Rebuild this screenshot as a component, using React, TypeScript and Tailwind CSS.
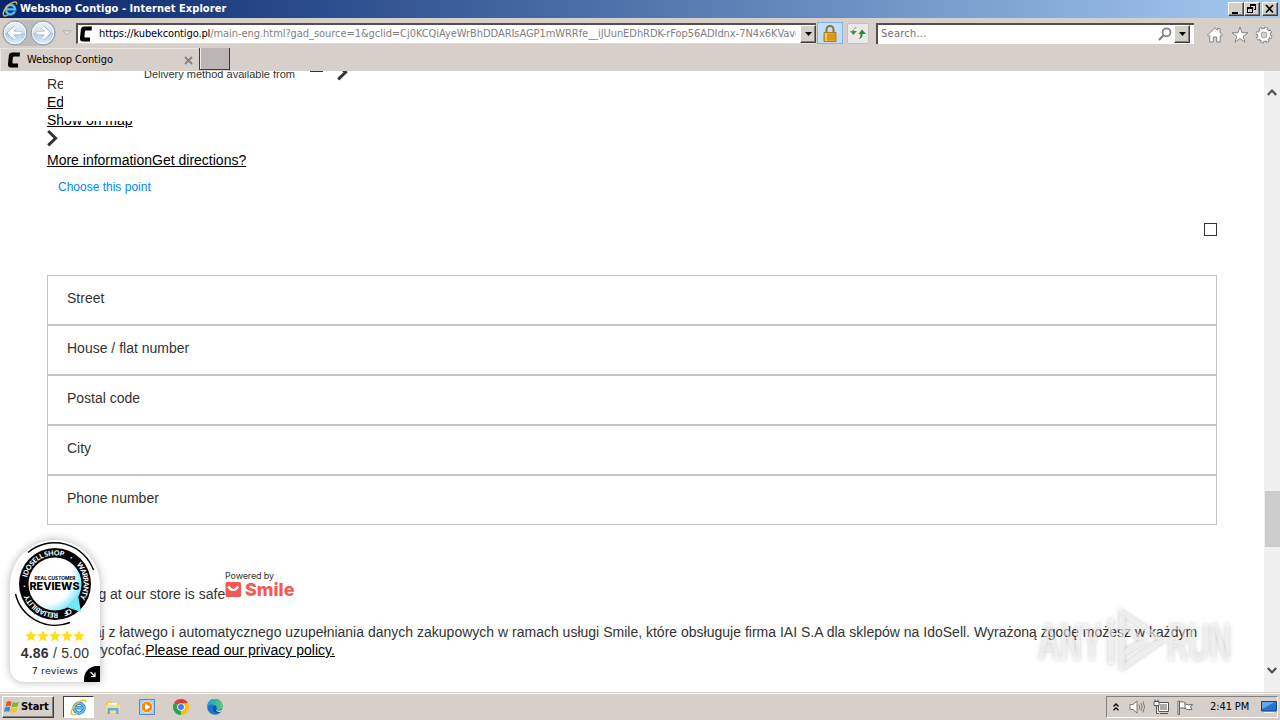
import type { ReactNode } from "react";

const fields = ["Street", "House / flat number", "Postal code", "City", "Phone number"];

const tahoma = "font-['DejaVu_Sans_Condensed','DejaVu_Sans',sans-serif]";
const arial = "font-['Liberation_Sans',Arial,sans-serif]";

const ContigoIcon = () => (
  <svg width="14" height="16" viewBox="0 0 14 16" className="shrink-0">
    <path d="M13 .5H5Q2.3.5 1.9 3L1 12Q.8 15.5 3.8 15.5H11V11.5H6.4Q5.3 11.5 5.4 10.3L5.9 5.6Q6 4.5 7.1 4.5H12.6Z" fill="#000" />
  </svg>
);

const IeIcon = ({ size }: { size: number }) => (
  <svg width={size} height={size} viewBox="0 0 16 16" className="shrink-0">
    <path d="M12.9 10.3A4.7 4.7 0 1 1 13.2 8.3H4.4" fill="none" stroke="#1b76c4" strokeWidth="3.1" />
    <path d="M12.9 10.3A4.7 4.7 0 1 1 13.2 8.3H4.4" fill="none" stroke="#63c2f2" strokeWidth="1.7" />
    <path d="M2.3 14.8C-.8 13.4 3.2 5.7 8.5 2.6C12.5.2 15.3.4 14.6 3.3M2.3 14.8C3.4 15.3 5 14.6 6.3 13.7" fill="none" stroke="#e9bd2c" strokeWidth="1.3" />
  </svg>
);

const Arrow = ({ flip }: { flip?: boolean }) => (
  <svg width="26" height="26" viewBox="0 0 26 26" className={flip ? "-scale-x-100" : ""}>
    <defs>
      <linearGradient id="nav" x1="0" y1="0" x2="0" y2="1">
        <stop offset="0" stopColor="#eef2f5" />
        <stop offset=".48" stopColor="#d5e0ea" />
        <stop offset=".52" stopColor="#b4cadf" />
        <stop offset="1" stopColor="#e2f3fb" />
      </linearGradient>
    </defs>
    <circle cx="13" cy="13" r="11.8" fill="url(#nav)" stroke="#8b9aa8" />
    <circle cx="13" cy="13" r="10.7" fill="none" stroke="#fff" strokeOpacity=".8" />
    <path d="M19.5 13H8M13 7.5L7.5 13L13 18.5" fill="none" stroke="#8fa9c1" strokeWidth="4.2" />
    <path d="M19.5 13H8M13 7.5L7.5 13L13 18.5" fill="none" stroke="#fff" strokeWidth="3" />
  </svg>
);

const DropButton = ({ className }: { className: string }) => (
  <span className={`flex items-center justify-center bg-[#d4d0c8] border border-t-white border-l-white border-r-[#404040] border-b-[#404040] shadow-[inset_-1px_-1px_#808080] ${className}`}>
    <svg width="7" height="4" viewBox="0 0 7 4"><path d="M0 0H7L3.5 4Z" /></svg>
  </span>
);

const WindowButton = ({ children }: { children: ReactNode }) => (
  <span className="w-4 h-3.5 bg-[#d4d0c8] border border-t-white border-l-white border-r-[#404040] border-b-[#404040] shadow-[inset_-1px_-1px_#808080]">
    <svg width="14" height="12" viewBox="0 0 14 12">{children}</svg>
  </span>
);

const TitleBar = () => (
  <header className="h-[18px] flex items-center pl-0.5 pr-0.5 bg-linear-to-r from-[#0a246a] to-[#a6caf0]">
    <IeIcon size={16} />
    <span className="ml-0.5 pt-px text-[11px] font-bold text-white whitespace-nowrap tracking-[0.05px]">
      Webshop Contigo - Internet Explorer
    </span>
    <div className="ml-auto flex">
      <WindowButton><path d="M3 9h6v2H3z" /></WindowButton>
      <WindowButton>
        <path d="M5 1h6v6H9V6h1V3H6v1H5zM2 4h6v6H2zM3 6v3h4V6z" fillRule="evenodd" />
      </WindowButton>
      <span className="w-0.5" />
      <WindowButton><path d="M3 2L10 9.5M10 2L3 9.5" stroke="#000" strokeWidth="1.7" /></WindowButton>
    </div>
  </header>
);

const AddressBar = () => (
  <div className="h-[30px] flex items-center">
    <div className="w-[76px] flex items-center pl-0.5">
      <div className="flex gap-0.5 rounded-full bg-[#bcbcbc]"><Arrow /><Arrow flip /></div>
      <svg width="10" height="6" viewBox="0 0 10 6" className="ml-1.5"><path d="M1 .8H9L5 5Z" fill="#e6e3df" stroke="#b3afab" /></svg>
    </div>
    <div className="w-[740px] h-[21px] flex items-center bg-white border-t-2 border-l-2 border-t-[#55504d] border-l-[#55504d] border-b border-b-[#e2deda] pl-[1px]">
      <ContigoIcon />
      <div className="ml-[6px] pt-0.5 w-[697px] overflow-hidden whitespace-nowrap text-[11px] tracking-[-0.055px] text-[#808080]">
        <span className="text-black tracking-[-0.12px]">https://kubekcontigo.pl</span>
        /main-eng.html?gad_source=1&amp;gclid=Cj0KCQiAyeWrBhDDARIsAGP1mWRRfe__iJUunEDhRDK-rFop56ADIdnx-7N4x6KVavcQ
      </div>
      <DropButton className="ml-auto w-4 h-[18px]" />
    </div>
    <div className="ml-[1px] w-[26px] h-[22px] flex items-center justify-center bg-[#c4ddf8] border border-[#7eb4ea]">
      <svg width="14" height="17" viewBox="0 0 14 17">
        <path d="M3.5 8V4.5a3.5 3.5 0 0 1 7 0V8" fill="none" stroke="#8d7433" strokeWidth="2" />
        <path d="M1 7.5h12v9H1z" fill="#e9a820" stroke="#ad7a16" />
        <path d="M1.5 10h11M1.5 12h11M1.5 14h11" stroke="#c68716" />
        <path d="M3 8v8" stroke="#f8d474" strokeWidth="1.5" />
      </svg>
    </div>
    <div className="ml-1 w-[22px] h-[21px] flex items-center justify-center bg-[#ebe9e7] border border-[#c3bfbb] rounded-xs">
      <svg width="16" height="14" viewBox="0 0 16 14">
        <path d="M7 1Q4 1 4 4V5H7L3.2 9L0 5H2" fill="#3e9b43" />
        <path d="M9 13Q12.5 12 12.5 9V8H16L12 3.5L8.5 8H10.5V9Q10.5 11 9 13Z" fill="#2b8a35" />
      </svg>
    </div>
    <div className="ml-[7px] w-[318px] h-[21px] flex items-center bg-white border-t-2 border-l-2 border-t-[#55504d] border-l-[#55504d] pr-1">
      <span className="ml-[3px] pt-px text-[11px] text-[#707070] tracking-[0.25px]">Search...</span>
      <svg width="14" height="14" viewBox="0 0 14 14" className="ml-auto mr-0.5">
        <circle cx="8.5" cy="5.3" r="4" fill="none" stroke="#808080" strokeWidth="1.7" />
        <path d="M5.5 8.3L1 13" stroke="#808080" strokeWidth="2.2" />
      </svg>
      <DropButton className="w-4 h-[18px]" />
    </div>
    <div className="ml-3 flex items-center gap-[7px] mt-[3px]">
      <svg width="18" height="18" viewBox="0 0 18 18" fill="#fff" stroke="#858585">
        <path d="M1.5 9L9 1.8L11.6 4.3V2.5H14V6.6L16.5 9L15 10.3L14.2 9.7V16H10.7V11H7.3V16H3.8V9.7L3 10.3Z" />
      </svg>
      <svg width="18" height="18" viewBox="0 0 18 18" fill="#fff" stroke="#858585">
        <path d="M9 1L11 6.7H17L12.2 10.3L14 16.2L9 12.6L4 16.2L5.8 10.3L1 6.7H7Z" />
      </svg>
      <svg width="18" height="18" viewBox="0 0 18 18" className="-ml-px">
        <circle cx="9" cy="9" r="6.6" fill="none" stroke="#808080" strokeWidth="3.4" strokeDasharray="3.2 1.98" />
        <circle cx="9" cy="9" r="4.8" fill="none" stroke="#808080" strokeWidth="4.2" />
        <circle cx="9" cy="9" r="6.6" fill="none" stroke="#fff" strokeWidth="2" strokeDasharray="1.8 3.38" strokeDashoffset="-.7" />
        <circle cx="9" cy="9" r="4.6" fill="none" stroke="#fff" strokeWidth="2.8" />
        <circle cx="9" cy="9" r="2.2" fill="#d6cfca" />
      </svg>
    </div>
  </div>
);

const TabBar = () => (
  <div className="h-[23px] flex items-start">
    <div className="w-[199px] h-[23px] flex items-center pl-[6px] pr-1.5 border-t border-l border-[#e9e5e1]">
      <ContigoIcon />
      <span className="ml-1.5 pt-px text-[11px] text-black tracking-[-0.05px]">Webshop Contigo</span>
      <svg width="9" height="9" viewBox="0 0 9 9" className="ml-auto"><path d="M1 1L8 8M8 1L1 8" stroke="#8a8582" strokeWidth="1.8" /></svg>
    </div>
    <div className="w-[31px] h-[22px] bg-[#bbb6b3] border-l border-r border-b border-[#3c3938] shadow-[inset_1px_0_#eee]" />
  </div>
);

const Chevron = () => (
  <svg width="11" height="18" viewBox="0 0 11 18"><path d="M1.2 2L8.6 9.3L1.2 16.4" fill="none" stroke="#333" strokeWidth="3" /></svg>
);

// start angle (clockwise from the top) and arc length of each word on the ring
const ringWords = [
  { text: "IDOSELL SHOP", angle: 283, length: 47 },
  { text: "·", angle: 30, length: 2 },
  { text: "WARRANTY", angle: 48, length: 36 },
  { text: "OF", angle: 148, length: 8 },
  { text: "RELIABILITY", angle: 174, length: 37 },
  { text: "·", angle: 264, length: 2 },
];

const ReviewsBadge = () => (
  <div className="absolute left-[10px] top-[469px] w-[90px] h-[142px] flex flex-col items-center bg-white rounded-t-[45px] rounded-bl-[14px] shadow-[0_0_8px_rgba(0,0,0,0.3)]">
    <svg width="86" height="86" viewBox="0 0 86 86" className="mt-px shrink-0">
      <defs>
        <path id="ring" d="M43 14.3A28.7 28.7 0 1 1 42.9 14.3" />
        <radialGradient id="glow" cx=".3" cy=".36" r=".75">
          <stop offset=".7" stopColor="#fff" />
          <stop offset="1" stopColor="#6fe6f5" />
        </radialGradient>
      </defs>
      <circle cx="43" cy="43" r="36" fill="#050505" />
      <circle cx="43" cy="43" r="26.5" fill="url(#glow)" />
      <path d="M54 66L69 71L66 54Z" fill="#70e8f5" />
      <path d="M16 11.5A41.3 41.3 0 0 1 81.5 29M3.5 53A41 41 0 0 0 58 81.5" fill="none" stroke="#000" strokeWidth="1.4" />
      <g fill="#fff" className="font-['Lato','Inter',sans-serif] text-[7px] font-black">
        {ringWords.map(({ text, angle, length }) => (
          <text key={angle} transform={`rotate(${angle} 43 43)`} textLength={length}>
            <textPath href="#ring" textLength={length}>{text}</textPath>
          </text>
        ))}
      </g>
      <g textAnchor="middle" className="font-['Inter',sans-serif]">
        <text x="43" y="38.5" fontSize="4.5" fontWeight="700" textLength="41" lengthAdjust="spacingAndGlyphs">REAL CUSTOMER</text>
        <text x="42.5" y="48.7" fontSize="11" fontWeight="800" textLength="50" lengthAdjust="spacingAndGlyphs">REVIEWS</text>
      </g>
    </svg>
    <svg width="62" height="12" viewBox="0 0 62 12" className="mt-[3px] shrink-0" fill="#ffdf1b">
      {[0, 12, 24, 36, 48].map((x) => (
        <path key={x} transform={`translate(${x + 1} 0)`} d="M6 .3L7.7 4.1L11.8 4.5L8.7 7.2L9.6 11.3L6 9.2L2.4 11.3L3.3 7.2L.2 4.5L4.3 4.1Z" />
      ))}
    </svg>
    <div className={`${arial} mt-[3px] text-[14px] leading-4 text-[#333] tracking-[0.2px] whitespace-nowrap`}>
      <b>4.86</b> / 5.00
    </div>
    <div className="mt-[3px] text-[9.5px] leading-[14px] text-[#222] font-['DejaVu_Sans',sans-serif] tracking-[0.1px]">7 reviews</div>
    <svg width="16" height="16" viewBox="0 0 16 16" className="absolute right-0 bottom-0">
      <path d="M16 0V16H0V13A13 13 0 0 1 13 0Z" />
      <path d="M6.5 6L11 10.5M11 6.5V10.5H7" fill="none" stroke="#fff" strokeWidth="1.2" />
    </svg>
  </div>
);

const Watermark = () => (
  <svg width="200" height="66" viewBox="0 0 200 66" className="absolute left-[1036px] top-[536px] drop-shadow-[0_0_2px_rgba(0,0,0,0.4)]">
    <g fill="#fff" fillOpacity=".5" className="font-['Liberation_Sans',sans-serif]" fontSize="52" fontWeight="700">
      <text x="2" y="53" textLength="64" lengthAdjust="spacingAndGlyphs">ANY</text>
      <text x="131" y="53" textLength="64" lengthAdjust="spacingAndGlyphs">RUN</text>
    </g>
    <g fill="none" stroke="#fff" strokeOpacity=".6" strokeWidth="5">
      <path d="M75 12V57M86 60V6L126 33L84 62M88 46L108 34L88 20" />
    </g>
  </svg>
);

const Page = () => (
  <main className={`${arial} relative h-[621px] overflow-hidden bg-white text-[14px] leading-[18px] text-[#333]`}>
    <div className="w-[1264px] pl-[47px] pr-[47px] pt-1">
      <div>Recipient</div>
      <div className="text-black underline">Edit</div>
      <div className="text-black underline">Show on map</div>
      <div className="h-[22px]"><Chevron /></div>
      <div className="text-black underline">More informationGet directions?</div>
      <div className="mt-[9px] pl-[11px] text-[12px] text-[#0088e8]">Choose this point</div>
      <div className="mt-[27px] flex justify-end"><span className="w-[13px] h-[13px] border border-[#333]" /></div>
      <form className="mt-[39px]">
        {fields.map((field) => (
          <div key={field} className="h-[50px] pl-[19px] pt-[13px] border border-[#c4c4c4]">{field}</div>
        ))}
      </form>
      <div className="mt-[45px] flex h-[35px]">
        <span className="pt-[15px] whitespace-nowrap">Shopping at our store is safe</span>
        <svg width="72" height="30" viewBox="0 0 72 30" className="shrink-0 font-['Inter','Open_Sans',sans-serif]">
          <text x="0" y="9" fontSize="9" fill="#333" textLength="49">Powered by</text>
          <rect x=".5" y="12" width="15.5" height="15" rx="1.5" fill="#f15b52" />
          <path d="M3.2 16.5Q8.2 23.5 13.2 16.5" fill="none" stroke="#fff" strokeWidth="2.2" />
          <text x="20" y="26" fontSize="18" fontWeight="800" fill="#f15b52" textLength="49.5" lengthAdjust="spacingAndGlyphs">Smile</text>
        </svg>
      </div>
      <p className="mt-[18px] tracking-[0.006px]">
        Korzystaj z łatwego i automatycznego uzupełniania danych zakupowych w ramach usługi Smile, które obsługuje firma IAI S.A dla sklepów na IdoSell. Wyrażoną zgodę możesz w każdym<br />
        czasie wycofać.<span className="text-black underline">Please read our privacy policy.</span>
      </p>
    </div>

    {/* pickup point panel floating over the list */}
    <div className="absolute left-[63px] top-0 w-[1190px] h-[50px] bg-white overflow-hidden">
      <div className="flex -mt-[6px] pl-[81px] text-[11px]">
        <span className="w-[166px] whitespace-nowrap">Delivery method available from</span>
        <span className="mt-[6px] w-[13px] h-px bg-[#333]" />
        <span className="ml-[14px] -mt-[2px]"><Chevron /></span>
      </div>
    </div>

    <ReviewsBadge />
    <Watermark />
    <div className="absolute right-0 top-0 w-4 h-full flex flex-col items-center justify-between bg-[#f0f0f0] py-[17px]">
      <svg width="10" height="9" viewBox="0 0 10 9"><path d="M.8 7L5 2.5L9.2 7" fill="none" stroke="#505050" strokeWidth="2.2" /></svg>
      <svg width="10" height="9" viewBox="0 0 10 9"><path d="M.8 2L5 6.5L9.2 2" fill="none" stroke="#505050" strokeWidth="2.2" /></svg>
      <span className="absolute right-0 top-[420px] w-[15px] h-14 bg-[#cdcdcd]" />
    </div>
  </main>
);

const Taskbar = () => (
  <footer className="h-7 flex items-center bg-[#d6cfca] border-t border-[#d6cfca] shadow-[inset_0_1px_#fff] pt-px">
    <div className="ml-0.5 w-[52px] h-[22px] flex items-center pl-[1px] border border-t-white border-l-white border-r-[#404040] border-b-[#404040] shadow-[inset_-1px_-1px_#808080]">
      <svg width="16" height="16" viewBox="0 0 16 16">
        <path d="M2.5 3.2Q5 1.2 7.6 2.8L6.5 7.3Q4 6 1.4 7.5Z" fill="#e7572c" />
        <path d="M8.6 3Q11.5 4.6 14.8 2.7L13.7 7.2Q10.5 8.8 7.5 7.4Z" fill="#7fb63b" />
        <path d="M1.1 8.5Q3.8 7 6.3 8.3L5.2 12.8Q2.5 11.5 0 13Z" fill="#3d88d4" />
        <path d="M7.2 8.5Q10.4 10 13.4 8.3L12.2 12.8Q9.3 14.6 6.1 13.1Z" fill="#f3c02e" />
      </svg>
      <span className="ml-[1px] pt-px text-[11px] font-bold text-black tracking-[-0.1px]">Start</span>
    </div>
    <div className="ml-[9px] w-[31px] h-[22px] flex items-center justify-center bg-white border border-t-[#404040] border-l-[#404040] border-r-white border-b-white">
      <IeIcon size={17} />
    </div>
    <div className="ml-[11px] flex items-center gap-[18px]">
      <svg width="16" height="16" viewBox="0 0 16 16">
        <path d="M1 2h5l1 2h7v10H1z" fill="#e7c965" />
        <path d="M3 4h9v5H3z" fill="#fff8d8" />
        <path d="M1 6h14v8H1z" fill="#f4df94" />
        <path d="M2.5 15V10Q2.5 9 3.5 9H12.5Q13.5 9 13.5 10V15H11V11.5H5V15Z" fill="#63b0d8" />
      </svg>
      <svg width="16" height="16" viewBox="0 0 16 16">
        <path d="M.5.5h15v15H.5z" fill="#a9cff0" stroke="#5c8cbd" />
        <circle cx="8" cy="8" r="5.7" fill="#f28a1b" stroke="#fff" strokeWidth=".6" />
        <path d="M6 4.5L11.3 8L6 11.5Z" fill="#fff" />
      </svg>
      <svg width="16" height="16" viewBox="0 0 16 16">
        <path d="M8 8L1.07 4A8 8 0 0 1 14.93 4Z" fill="#e33b2e" />
        <path d="M8 8L14.93 4A8 8 0 0 1 8 16Z" fill="#fbc116" />
        <path d="M8 8V16A8 8 0 0 1 1.07 4Z" fill="#2ba24c" />
        <path d="M8 4.3h6.9V4L11.2 9.8L8 16L9 11Z" fill="#fbc116" />
        <circle cx="8" cy="8" r="3.8" fill="#fff" />
        <circle cx="8" cy="8" r="3" fill="#3f7de8" />
      </svg>
      <svg width="16" height="16" viewBox="0 0 16 16">
        <defs>
          <linearGradient id="edge">
            <stop offset="0" stopColor="#1f9de0" />
            <stop offset="1" stopColor="#55cf66" />
          </linearGradient>
        </defs>
        <circle cx="8" cy="8" r="7.8" fill="#1678ce" />
        <path d="M.2 7A7.8 7.8 0 0 1 15.8 7.6Q15.5 10.7 12 10.7H9.6Q10.8 8.9 9.8 7.5Q7.8 5 4 5.6Q1 6 .2 7Z" fill="url(#edge)" />
        <path d="M5.8 9Q5.4 13.7 10 14Q12.5 14 14.6 12.6L13.8 11.4Q8 13 9 7Q6.4 6.3 5.8 9Z" fill="#0d519b" />
        <path d="M9.5 10.8Q10 12.3 14.8 11L16 8V16H12L14.5 12.5Q10 14 9 11Z" fill="#d6cfca" />
      </svg>
    </div>
    <div className="ml-auto mr-[2px] w-[172px] h-[22px] flex items-center border border-t-[#808080] border-l-[#808080] border-r-white border-b-white pl-1.5">
      <svg width="6" height="8" viewBox="0 0 6 8"><path d="M.5 3.5L3 1L5.5 3.5M.5 7.3L3 4.8L5.5 7.3" fill="none" stroke="#000" strokeWidth="1.3" /></svg>
      <svg width="17" height="14" viewBox="0 0 17 14" className="ml-[10px]" stroke="#777">
        <path d="M1 4.5H4L8 1V13L4 9.5H1Z" fill="#fff" />
        <path d="M10 4.5Q11.5 7 10 9.5M12 3Q14.2 7 12 11M14 1.5Q17 7 14 12.5" fill="none" />
      </svg>
      <svg width="17" height="16" viewBox="0 0 17 16" className="ml-[7px]" fill="#fff" stroke="#555">
        <path d="M5.5 3.5H15.5V12.5H5.5ZM7 14.5H15" />
        <path d="M7 5h7v6H7z" fill="#aaa" stroke="none" />
        <path d="M1 2.5H6V6.5H1ZM2 .5V2.5M5 .5V2.5M3.5 7V14.5H6" />
      </svg>
      <svg width="17" height="15" viewBox="0 0 17 15" className="ml-[7px]" fill="#fff" stroke="#666">
        <path d="M2.5 1H1V14.5H2.5ZM2.5 2Q5 1 8 2.5V8.5Q5 7 2.5 8.5ZM8 4Q11 5.5 15.5 4.5L13.5 7L15 9.5Q11 10.5 8 8.5" />
      </svg>
      <span className="ml-[16px] pt-px w-[45px] text-[11px] text-black whitespace-nowrap tracking-[-0.1px]">2:41 PM</span>
      <svg width="16" height="14" viewBox="0 0 16 14" className="ml-[6px]">
        <path d="M.5 1.5H15.5V11H.5Z" fill="#2873ce" stroke="#153f83" />
        <path d="M1 2H14L1 9Z" fill="#66a8ee" />
        <path d="M3 12.5H13" stroke="#f4f4f4" />
      </svg>
    </div>
  </footer>
);

export default function App() {
  return (
    <div className={`${tahoma} w-[1280px] h-[720px] overflow-hidden bg-[#d6cfca]`}>
      <TitleBar />
      <AddressBar />
      <TabBar />
      <Page />
      <Taskbar />
    </div>
  );
}
